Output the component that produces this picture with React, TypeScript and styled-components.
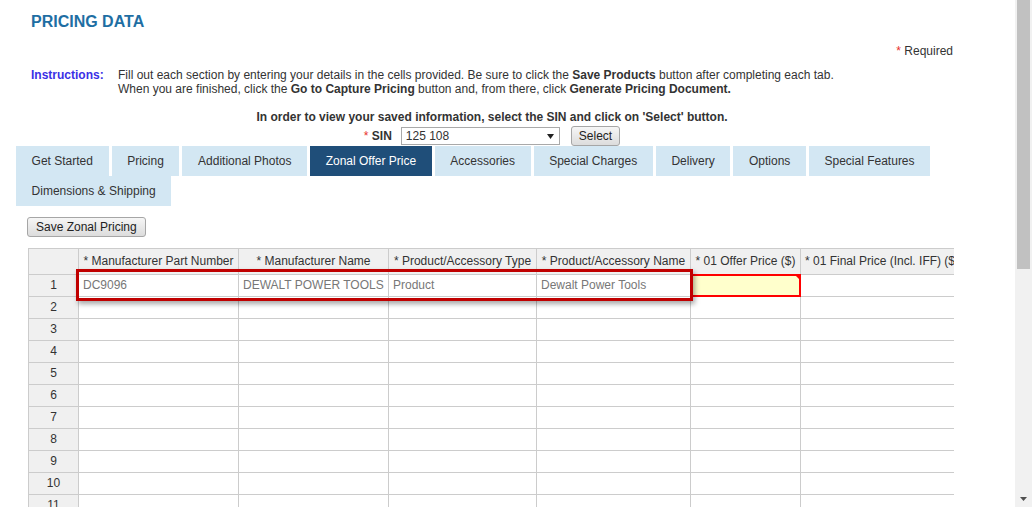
import React from "react";
import styled, { createGlobalStyle } from "styled-components";

const GlobalStyle = createGlobalStyle`
  html, body { margin: 0; padding: 0; background: #fff; overflow: hidden; }
  body {
    font-family: "Liberation Sans", Arial, Helvetica, sans-serif;
    font-size: 12px;
    color: #333;
  }
`;

const Page = styled.div`
  display: flex;
  width: 1032px;
  height: 507px;
  overflow: hidden;
`;

const Main = styled.div`
  flex: 1;
  min-width: 0;
  height: 100%;
  overflow: hidden;
`;

const Header = styled.div`
  padding-left: 31px;
  width: 922px;
`;

const Title = styled.h1`
  margin: 12px 0 0;
  font-size: 16px;
  line-height: 20px;
  font-weight: bold;
  color: #1e6ea3;
`;

const Required = styled.div`
  margin-top: 12px;
  text-align: right;
  line-height: 14px;
`;

const Star = styled.span`
  color: #e8302c;
`;

const Instructions = styled.div`
  display: grid;
  grid-template-columns: 87px 1fr;
  margin-top: 10px;
  line-height: 14px;
`;

const Label = styled.span`
  font-weight: bold;
  color: #3a30e6;
`;

const Prompt = styled.div`
  margin-top: 14px;
  text-align: center;
  font-weight: bold;
  line-height: 14px;
`;

const SinRow = styled.div`
  margin-top: 1px;
  height: 21px;
  display: flex;
  justify-content: center;
  align-items: center;
`;

const SinLabel = styled.span`
  margin-right: 9px;
  b { font-weight: bold; }
`;

const SelectWrap = styled.div`
  position: relative;
  width: 159px;
  height: 18px;
  margin-right: 11px;
`;

const Select = styled.select`
  appearance: none;
  -webkit-appearance: none;
  width: 100%;
  height: 100%;
  box-sizing: border-box;
  border: 1px solid #a9a9a9;
  border-radius: 0;
  background: #fff;
  padding: 0 0 0 4px;
  font: 12px "Liberation Sans", Arial, sans-serif;
  color: #333;
  outline: none;
`;

const SelectArrow = styled.svg`
  position: absolute;
  right: 6px;
  top: 7px;
  pointer-events: none;
`;

const Button = styled.button<{ $px: number }>`
  height: 20px;
  padding: 0 ${(p) => p.$px}px;
  border: 1px solid #a6a6a6;
  border-radius: 3px;
  background: linear-gradient(#f6f6f6, #dcdcdc);
  font: 12px "Liberation Sans", Arial, sans-serif;
  color: #222;
  line-height: 18px;
  cursor: pointer;
`;

const Tabs = styled.div`
  display: flex;
  flex-wrap: wrap;
  column-gap: 3px;
  margin-left: 16px;
`;

const Tab = styled.div<{ $active?: boolean }>`
  height: 30px;
  line-height: 30px;
  padding: 0 15.6px;
  white-space: nowrap;
  background: ${(p) => (p.$active ? "#1f4e79" : "#d3e7f3")};
  color: ${(p) => (p.$active ? "#fff" : "#333")};
`;

const Toolbar = styled.div`
  margin: 11px 0 0 27px;
  height: 20px;
`;

const TableWrap = styled.div`
  position: relative;
  margin: 11px 0 0 28px;
  width: 926px;
  overflow: hidden;
`;

const Grid = styled.table`
  border-collapse: separate;
  border-spacing: 0;
  border-left: 1px solid #ccc;
  border-top: 1px solid #ccc;
`;

const Cell = styled.td<{ $head?: boolean; $selected?: boolean }>`
  padding: 0;
  border-right: 1px solid #ccc;
  border-bottom: 1px solid #ccc;
  background: ${(p) => (p.$head ? "#f0f0f0" : p.$selected ? "#ffffcc" : "#fff")};
  position: ${(p) => (p.$selected ? "relative" : "static")};
  font-weight: normal;
  &::after {
    content: ${(p) => (p.$selected ? "''" : "none")};
    position: absolute;
    left: 0;
    top: -1px;
    right: -1px;
    bottom: -1px;
    border: 2px solid #ff0000;
  }
  &::before {
    content: ${(p) => (p.$selected ? "''" : "none")};
    position: absolute;
    z-index: 1;
    right: -1px;
    top: -1px;
    width: 0;
    height: 0;
    border-left: 7px solid transparent;
    border-top: 7px solid #ff0000;
  }
`;

const Box = styled.div<{ $w: number; $h: number; $center?: boolean; $muted?: boolean }>`
  width: ${(p) => p.$w}px;
  height: ${(p) => p.$h}px;
  line-height: ${(p) => p.$h}px;
  box-sizing: border-box;
  padding: 0 4px;
  overflow: hidden;
  white-space: nowrap;
  text-align: ${(p) => (p.$center ? "center" : "left")};
  color: ${(p) => (p.$muted ? "#777" : "#333")};
`;

const Highlight = styled.div`
  position: absolute;
  left: 48px;
  top: 21px;
  width: 617px;
  height: 32px;
  box-sizing: border-box;
  border: 3px solid #c00000;
  box-shadow: 2px 3px 5px rgba(0, 0, 0, 0.35);
  pointer-events: none;
`;

const Scrollbar = styled.div`
  width: 17px;
  height: 100%;
  background: #f1f1f1;
  display: flex;
  flex-direction: column;
`;

const Thumb = styled.div`
  margin-left: 2px;
  width: 13px;
  height: 269px;
  background: #c1c1c1;
`;

const Track = styled.div`
  flex: 1;
`;

const ArrowBox = styled.div`
  height: 17px;
  display: flex;
  align-items: center;
  justify-content: center;
`;

const tabs = [
  "Get Started",
  "Pricing",
  "Additional Photos",
  "Zonal Offer Price",
  "Accessories",
  "Special Charges",
  "Delivery",
  "Options",
  "Special Features",
  "Dimensions & Shipping",
];

const columns = [
  { title: "* Manufacturer Part Number", w: 159 },
  { title: "* Manufacturer Name", w: 149 },
  { title: "* Product/Accessory Type", w: 147 },
  { title: "* Product/Accessory Name", w: 153 },
  { title: "* 01 Offer Price ($)", w: 109 },
  { title: "* 01 Final Price (Incl. IFF) ($)", w: 161 },
];

const firstRow = ["DC9096", "DEWALT POWER TOOLS", "Product", "Dewalt Power Tools", "", ""];

const rows = Array.from({ length: 11 }, (_, i) => i + 1);

export default function App() {
  return (
    <>
      <GlobalStyle />
      <Page>
        <Main>
          <Header>
            <Title>PRICING DATA</Title>
            <Required>
              <Star>*</Star> Required
            </Required>
            <Instructions>
              <Label>Instructions:</Label>
              <span>
                Fill out each section by entering your details in the cells provided. Be sure to click the{" "}
                <b>Save Products</b> button after completing each tab.
                <br />
                When you are finished, click the <b>Go to Capture Pricing</b> button and, from there, click{" "}
                <b>Generate Pricing Document.</b>
              </span>
            </Instructions>
            <Prompt>In order to view your saved information, select the SIN and click on 'Select' button.</Prompt>
            <SinRow>
              <SinLabel>
                <Star>*</Star> <b>SIN</b>
              </SinLabel>
              <SelectWrap>
                <Select defaultValue="125 108">
                  <option>125 108</option>
                </Select>
                <SelectArrow width="7" height="5" viewBox="0 0 7 5">
                  <path d="M0 0 H7 L3.5 5 Z" fill="#222" />
                </SelectArrow>
              </SelectWrap>
              <Button $px={7}>Select</Button>
            </SinRow>
          </Header>
          <Tabs>
            {tabs.map((t) => (
              <Tab key={t} $active={t === "Zonal Offer Price"}>
                {t}
              </Tab>
            ))}
          </Tabs>
          <Toolbar>
            <Button $px={8}>Save Zonal Pricing</Button>
          </Toolbar>
          <TableWrap>
            <Grid>
              <thead>
                <tr>
                  <Cell as="th" $head>
                    <Box $w={49} $h={25} />
                  </Cell>
                  {columns.map((c) => (
                    <Cell as="th" $head key={c.title}>
                      <Box $w={c.w} $h={25} $center>
                        {c.title}
                      </Box>
                    </Cell>
                  ))}
                </tr>
              </thead>
              <tbody>
                {rows.map((r) => (
                  <tr key={r}>
                    <Cell $head>
                      <Box $w={49} $h={21} $center>
                        {r}
                      </Box>
                    </Cell>
                    {columns.map((c, ci) => (
                      <Cell key={c.title} $selected={r === 1 && ci === 4}>
                        <Box $w={c.w} $h={21} $muted>
                          {r === 1 ? firstRow[ci] : ""}
                        </Box>
                      </Cell>
                    ))}
                  </tr>
                ))}
              </tbody>
            </Grid>
            <Highlight />
          </TableWrap>
        </Main>
        <Scrollbar>
          <Thumb />
          <Track />
          <ArrowBox>
            <svg width="7" height="4" viewBox="0 0 7 4">
              <path d="M0 0 H7 L3.5 4 Z" fill="#505050" />
            </svg>
          </ArrowBox>
        </Scrollbar>
      </Page>
    </>
  );
}
